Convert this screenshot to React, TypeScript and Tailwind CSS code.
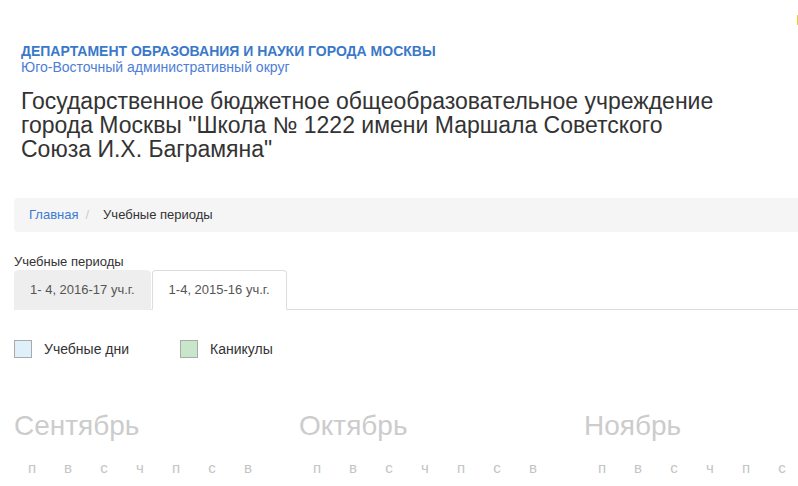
import React from "react";

const months = ["Сентябрь", "Октябрь", "Ноябрь"];
const days = ["п", "в", "с", "ч", "п", "с", "в"];

function Tabs() {
    return (
        <ul className="flex border-b border-[#ddd]">
            <li className="-mb-px mr-[1px]">
                <span className="block rounded-t-[4px] border border-[#eee] bg-[#eee] px-[15px] py-[10px] text-[13px] leading-[18px] text-[#555]">
                    1- 4, 2016-17 уч.г.
                </span>
            </li>
            <li className="-mb-px">
                <span className="block rounded-t-[4px] border border-[#ddd] border-b-white bg-white px-[16px] py-[10px] text-[13px] leading-[18px] text-[#555]">
                    1-4, 2015-16 уч.г.
                </span>
            </li>
        </ul>
    );
}

export default function App() {
    return (
        <div className="relative h-[486px] w-[798px] overflow-hidden bg-white font-['Liberation_Sans',Arial,sans-serif]">
            <div className="absolute right-0 top-[15px] h-[10px] w-px bg-[#f2cf1a]" />
            <div className="pl-[14px] pt-[43px]">
                <div className="px-[7px]">
                    <p className="text-[14px] font-bold leading-[16px] text-[#3a78c9]">
                        ДЕПАРТАМЕНТ ОБРАЗОВАНИЯ И НАУКИ ГОРОДА МОСКВЫ
                    </p>
                    <p className="text-[14px] leading-[16px] text-[#4d7ed6]">Юго-Восточный административный округ</p>
                    <h1 className="mt-[14px] text-[23px] leading-[24px] text-[#333]">
                        Государственное бюджетное общеобразовательное учреждение
                        <br />
                        города Москвы "Школа № 1222 имени Маршала Советского
                        <br />
                        Союза И.Х. Баграмяна"
                    </h1>
                </div>

                <div className="mt-[37px] flex h-[34px] items-center rounded-l-[4px] bg-[#f5f5f5] px-[15px] text-[13px] leading-[18px]">
                    <span className="text-[#3a7bd5]">Главная</span>
                    <span className="ml-[7px] mr-[14px] text-[#ccc]">/</span>
                    <span className="text-[#333]">Учебные периоды</span>
                </div>

                <p className="mt-[22px] text-[13px] leading-[16px] text-[#333]">Учебные периоды</p>
                <Tabs />

                <div className="mt-[30px] flex items-center text-[14px] leading-[18px] text-[#333]">
                    <span className="h-[18px] w-[18px] border border-[#aaa] bg-[#dff0fb]" />
                    <span className="ml-[12px]">Учебные дни</span>
                    <span className="ml-[51px] h-[18px] w-[18px] border border-[#aaa] bg-[#c8e6c9]" />
                    <span className="ml-[12px]">Каникулы</span>
                </div>

                <div className="mt-[52px] grid grid-cols-[285px_285px_285px]">
                    {months.map((m) => (
                        <div key={m}>
                            <h2 className="text-[28px] leading-[32px] text-[#ccc]">{m}</h2>
                            <div className="mt-[16px] flex text-[15px] leading-[20px] text-[#c4c4c4]">
                                {days.map((d, i) => (
                                    <span key={i} className="w-[36px] text-center">
                                        {d}
                                    </span>
                                ))}
                            </div>
                        </div>
                    ))}
                </div>
            </div>
        </div>
    );
}
